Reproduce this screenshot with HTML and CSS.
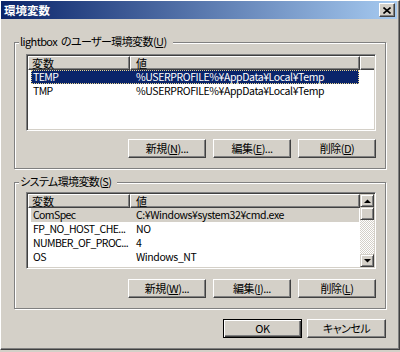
FILE: index.html
```html
<!DOCTYPE html>
<html lang="ja">
<head>
<meta charset="utf-8">
<title>環境変数</title>
<link rel="stylesheet" href="styles.css">
</head>
<body>
<div class="window">
  <div class="titlebar">
    <span class="title">環境変数</span>
    <div class="close" aria-label="閉じる">
      <svg width="8" height="7" viewBox="0 0 8 7"><path d="M0.5 0.5L7.5 6.5M7.5 0.5L0.5 6.5" stroke="#000" stroke-width="1.6" fill="none"/></svg>
    </div>
  </div>
  <div class="content">
    <div class="group">
      <div class="group-title">lightbox のユーザー環境変数(<u>U</u>)</div>
      <div class="list">
        <div class="list-main">
          <div class="header">
            <div class="hcell c1">変数</div>
            <div class="hcell c2">値</div>
            <div class="hcell fill"></div>
          </div>
          <div class="row selected"><span class="cell c1">TEMP</span><span class="cell c2">%USERPROFILE%¥AppData¥Local¥Temp</span></div>
          <div class="row"><span class="cell c1">TMP</span><span class="cell c2">%USERPROFILE%¥AppData¥Local¥Temp</span></div>
        </div>
      </div>
      <div class="btns">
        <div class="btn">新規(<u>N</u>)...</div>
        <div class="btn">編集(<u>E</u>)...</div>
        <div class="btn">削除(<u>D</u>)</div>
      </div>
    </div>
    <div class="group">
      <div class="group-title">システム環境変数(<u>S</u>)</div>
      <div class="list list-sys">
        <div class="list-main">
          <div class="header">
            <div class="hcell c1">変数</div>
            <div class="hcell c2">値</div>
          </div>
          <div class="row inactive"><span class="cell c1">ComSpec</span><span class="cell c2">C:¥Windows¥system32¥cmd.exe</span></div>
          <div class="row"><span class="cell c1">FP_NO_HOST_CHE...</span><span class="cell c2">NO</span></div>
          <div class="row"><span class="cell c1">NUMBER_OF_PROC...</span><span class="cell c2">4</span></div>
          <div class="row"><span class="cell c1">OS</span><span class="cell c2">Windows_NT</span></div>
        </div>
        <div class="scrollbar">
          <div class="sb-btn"><svg width="7" height="4" viewBox="0 0 7 4"><path d="M0 4L3.5 0.5L7 4Z" fill="#000"/></svg></div>
          <div class="sb-thumb"></div>
          <div class="sb-track"></div>
          <div class="sb-btn"><svg width="7" height="4" viewBox="0 0 7 4"><path d="M0 0L3.5 3.5L7 0Z" fill="#000"/></svg></div>
        </div>
      </div>
      <div class="btns">
        <div class="btn">新規(<u>W</u>)...</div>
        <div class="btn">編集(<u>I</u>)...</div>
        <div class="btn">削除(<u>L</u>)</div>
      </div>
    </div>
    <div class="footer">
      <div class="btn default">OK</div>
      <div class="btn">キャンセル</div>
    </div>
  </div>
</div>
</body>
</html>
```
FILE: styles.css
```css
* { box-sizing: border-box; }
html, body { margin: 0; padding: 0; }
body {
  width: 400px;
  height: 352px;
  overflow: hidden;
  background: #d4d0c8;
  font-family: "Noto Sans CJK JP", "Liberation Sans", sans-serif;
  font-size: 11px;
  color: #000;
  font-feature-settings: "palt";
}
u { text-decoration: underline; text-underline-offset: 1px; }

.window {
  width: 400px;
  height: 350px;
  border-top: 1px solid #fff;
  border-left: 1px solid #fff;
  border-right: 1px solid #404040;
  border-bottom: 1px solid #404040;
  box-shadow: inset -1px -1px 0 #808080;
  padding: 0 2px 2px 0;
  display: flex;
  flex-direction: column;
}

.titlebar {
  height: 18px;
  flex: none;
  background: linear-gradient(to right, #0a246a, #a6caf0);
  display: flex;
  align-items: center;
  justify-content: space-between;
  padding: 0 2px 0 3px;
}
.title {
  color: #fff;
  font-weight: bold;
  font-size: 11.5px;
  line-height: 14px;
  font-feature-settings: normal;
}
.close {
  width: 16px;
  height: 14px;
  background: #d4d0c8;
  border: 1px solid;
  border-color: #fff #404040 #404040 #fff;
  box-shadow: inset -1px -1px 0 #808080;
  display: flex;
  align-items: center;
  justify-content: center;
}

.content {
  padding: 23px 11px 0 13px;
  display: flex;
  flex-direction: column;
}

.group {
  border: 1px solid #808080;
  box-shadow: inset 1px 1px 0 #fff, 1px 1px 0 #fff;
  padding: 0 9px 10px 11px;
  display: flex;
  flex-direction: column;
}
.group + .group { margin-top: 13px; }
.group-title {
  width: max-content;
  margin: -8px 0 0 -7px;
  padding: 0 6px 0 1px;
  background: #d4d0c8;
  line-height: 13px;
  letter-spacing: -0.6px;
  word-spacing: 2px;
}

.list {
  margin-top: 6px;
  height: 77px;
  background: #fff;
  border: 1px solid;
  border-color: #808080 #fff #fff #808080;
  box-shadow: inset 1px 1px 0 #404040, inset -1px -1px 0 #d4d0c8;
  padding: 1px;
  display: flex;
}
.list-sys { margin-top: 4px; }
.list-main { flex: 1; min-width: 0; }

.header { display: flex; height: 14px; }
.hcell {
  background: #d4d0c8;
  border: 1px solid;
  border-color: #fff #404040 #404040 #fff;
  box-shadow: inset -1px -1px 0 #808080;
  line-height: 12px;
  padding-left: 3px;
  white-space: nowrap;
}
.hcell.c1 { width: 102px; }
.hcell.c2 { width: 230px; padding-left: 5px; }
.hcell.fill { flex: 1; border-right: none; box-shadow: inset 0 -1px 0 #808080; }

.row {
  display: flex;
  height: 14px;
  line-height: 14px;
  margin-left: 3px;
  width: 328px;
  white-space: nowrap;
  font-size: 10.5px;
  letter-spacing: -0.4px;
}
.cell { overflow: hidden; }
.row .c1 { width: 99px; padding-left: 2px; letter-spacing: -0.6px; }
.row .c2 { flex: 1; padding-left: 6px; }
.row.selected {
  background: #0a246a;
  color: #fff;
  outline: 1px dotted #e9d48e;
  outline-offset: -1px;
}
.row.inactive { background: #d4d0c8; }

.scrollbar {
  width: 14px;
  flex: none;
  display: flex;
  flex-direction: column;
}
.sb-btn, .sb-thumb {
  height: 13px;
  flex: none;
  background: #d4d0c8;
  border: 1px solid;
  border-color: #d4d0c8 #404040 #404040 #d4d0c8;
  box-shadow: inset 1px 1px 0 #fff, inset -1px -1px 0 #808080;
  display: flex;
  align-items: center;
  justify-content: center;
}
.sb-track {
  flex: 1;
  background: repeating-conic-gradient(#fff 0 25%, #d4d0c8 0 50%) 0 0 / 2px 2px;
}

.btns {
  margin-top: 8px;
  display: flex;
  justify-content: flex-end;
  gap: 7px;
}
.list-sys + .btns { margin-top: 10px; }

.btn {
  width: 78px;
  height: 19px;
  background: #d4d0c8;
  border: 1px solid;
  border-color: #fff #404040 #404040 #fff;
  box-shadow: inset -1px -1px 0 #808080;
  text-align: center;
  line-height: 16px;
  white-space: nowrap;
  letter-spacing: -0.5px;
}

.footer {
  margin-top: 10px;
  display: flex;
  justify-content: flex-end;
  gap: 5px;
}
.footer .btn { width: 79px; }
.btn.default {
  border-color: #000;
  box-shadow: inset 1px 1px 0 #fff, inset -1px -1px 0 #404040, inset -2px -2px 0 #808080;
}
```
